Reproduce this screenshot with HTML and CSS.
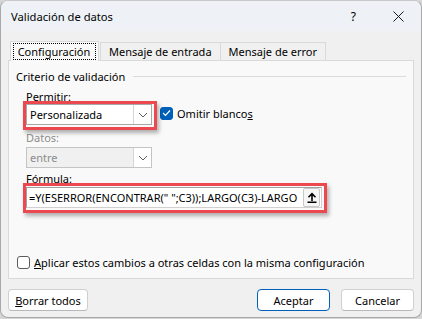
FILE: index.html
```html
<!DOCTYPE html>
<html lang="es">
<head>
  <meta charset="UTF-8" />
  <title>Validación de datos</title>
  <link rel="stylesheet" href="styles.css">
</head>
<body>
  <div class="dialog">
    <div class="titlebar">
      <span class="title">Validación de datos</span>
      <span class="help">?</span>
      <svg class="close" width="11" height="11" viewBox="0 0 11 11">
        <path d="M0.5 0.5 L10.5 10.5 M10.5 0.5 L0.5 10.5" stroke="#1a1a1a" stroke-width="1" fill="none"/>
      </svg>
    </div>

    <div class="content">
      <div class="tabs">
        <div class="tab active"><span class="focus">Configuración</span></div>
        <div class="tab">Mensaje de entrada</div>
        <div class="tab">Mensaje de error</div>
      </div>

      <div class="panel">
        <div class="group-title">
          <span>Criterio de validación</span>
          <div class="rule"></div>
        </div>

        <div class="fields">
          <label class="label first">Permitir:</label>
          <div class="row">
            <div class="highlight">
              <div class="select">
                <span class="value">Personalizada</span>
                <span class="arrow">
                  <svg width="10" height="6" viewBox="0 0 10 6"><path d="M1 1 L5 5 L9 1" stroke="#606060" stroke-width="1" fill="none"/></svg>
                </span>
              </div>
            </div>
            <div class="check-item">
              <span class="checkbox checked">
                <svg width="9" height="8" viewBox="0 0 9 8"><path d="M1 4 L3.5 6.5 L8 1.5" stroke="#fff" stroke-width="1.2" fill="none"/></svg>
              </span>
              <span>Omitir blanco<u>s</u></span>
            </div>
          </div>

          <label class="label disabled">Datos:</label>
          <div class="select disabled">
            <span class="value">entre</span>
            <span class="arrow">
              <svg width="10" height="6" viewBox="0 0 10 6"><path d="M1 1 L5 5 L9 1" stroke="#606060" stroke-width="1" fill="none"/></svg>
            </span>
          </div>

          <label class="label formula-label">Fórmula:</label>
          <div class="highlight">
            <div class="formula">
              <span class="formula-text">=Y(ESERROR(ENCONTRAR(" ";C3));LARGO(C3)-LARGO</span>
              <span class="upload">
                <svg width="10" height="11" viewBox="0 0 10 11"><path d="M5 9 L5 2 M1.5 5.2 L5 1.7 L8.5 5.2 M0.5 10.2 L9.5 10.2" stroke="#000" stroke-width="1.6" fill="none"/></svg>
              </span>
            </div>
          </div>
        </div>

        <div class="check-item apply">
          <span class="checkbox"></span>
          <span><u>A</u>plicar estos cambios a otras celdas con la misma configuración</span>
        </div>
      </div>

      <div class="footer">
        <button class="btn wide"><u>B</u>orrar todos</button>
        <div class="spacer"></div>
        <button class="btn primary">Aceptar</button>
        <button class="btn">Cancelar</button>
      </div>
    </div>
  </div>
</body>
</html>
```

FILE: styles.css
```css
body {
  margin: 0;
  background: #d6d6d6;
  font-family: "Noto Sans", sans-serif;
  font-size: 11px;
  color: #000;
}
.dialog {
  width: 420px;
  height: 316px;
  background: #f0f0f0;
  border: 1px solid #a8a8a8;
  border-top-color: #c8c8c8;
  border-radius: 8px;
  overflow: hidden;
  display: flex;
  flex-direction: column;
}
.titlebar {
  height: 30px;
  background: #eef2f7;
  display: flex;
  align-items: center;
  padding-left: 10px;
  font-size: 11.2px;
}
.title {
  flex: 1;
}
.help {
  font-size: 12px;
  margin-right: 37px;
}
.close {
  margin-right: 17px;
}
.content {
  flex: 1;
  padding: 10px 7px 0 7px;
  display: flex;
  flex-direction: column;
}
.tabs {
  display: flex;
  height: 19px;
  align-items: flex-end;
  padding-left: 2px;
}
.tab {
  height: 18px;
  padding: 0 8px;
  border: 1px solid #d9d9d9;
  border-bottom: none;
  background: #f0f0f0;
  display: flex;
  align-items: center;
  margin-left: -1px;
  box-sizing: border-box;
}
.tab.active {
  height: 20px;
  width: 89px;
  justify-content: center;
  background: #f9f9f9;
  padding: 0;
  margin-left: 0;
  margin-right: 2px;
  position: relative;
  top: 1px;
  z-index: 1;
}
.focus {
  outline: 1px dotted #000;
  padding: 0 5px 0 4px;
  line-height: 15px;
}
.panel {
  height: 219px;
  box-sizing: border-box;
  background: #f9f9f9;
  border: 1px solid #d9d9d9;
  padding: 7px 7px 0 7px;
  display: flex;
  flex-direction: column;
}
.group-title {
  display: flex;
  align-items: center;
  height: 16px;
}
.rule {
  flex: 1;
  height: 1px;
  background: #dcdcdc;
  margin: 1px 0 0 8px;
}
.fields {
  padding-left: 10px;
  display: flex;
  flex-direction: column;
  align-items: flex-start;
}
.label {
  margin-top: 5px;
  line-height: 15px;
}
.label.first {
  margin-top: 5px;
}
.label.disabled {
  color: #8c8c8c;
}
.formula-label {
  margin-top: 3px;
}
.row {
  display: flex;
  align-items: center;
}
/* red annotation boxes drawn with shadows so they don't push the layout */
.highlight {
  padding: 0 2px 2px 0;
  margin: 0 -2px -2px 0;
  box-shadow: 0 0 0 3px #ec4850, 2px 3px 4px 3px rgba(0, 0, 0, 0.3);
  position: relative;
  z-index: 1;
  background: #f9f9f9;
}
.select {
  width: 126px;
  height: 21px;
  box-sizing: border-box;
  border: 1px solid #a8a8a8;
  background: #fff;
  display: flex;
  align-items: center;
}
.select .value {
  flex: 1;
  padding-left: 3px;
}
.select .arrow {
  width: 17px;
  height: 19px;
  border-left: 1px solid #d4d4d4;
  display: flex;
  align-items: center;
  justify-content: center;
}
.select.disabled {
  margin-top: 2px;
  background: #f0f0f0;
  border-color: #c4c4c4;
  color: #8c8c8c;
}
.select.disabled .arrow {
  background: #fff;
}
.check-item {
  display: flex;
  align-items: center;
  gap: 4px;
}
.row .check-item {
  margin-left: 8px;
  margin-top: -3px;
}
.checkbox {
  width: 13px;
  height: 13px;
  box-sizing: border-box;
  border: 1px solid #5c5c5c;
  border-radius: 3px;
  background: #fff;
  display: flex;
  align-items: center;
  justify-content: center;
}
.checkbox.checked {
  background: #005fb8;
  border-color: #005fb8;
}
.formula {
  width: 296px;
  height: 21px;
  box-sizing: border-box;
  border: 1px solid #a0a0a0;
  border-right-color: #d0d0d0;
  border-bottom-color: #d0d0d0;
  background: #fff;
  display: flex;
  align-items: center;
  margin-top: 1px;
}
.formula-text {
  flex: 1;
  padding-left: 2px;
  white-space: nowrap;
  overflow: hidden;
}
.upload {
  width: 15px;
  height: 17px;
  margin-right: 1px;
  border: 1px solid #c8c8c8;
  border-radius: 2px;
  background: #f6f6f6;
  display: flex;
  align-items: center;
  justify-content: center;
}
.apply {
  margin-top: auto;
  margin-bottom: 8px;
  padding-left: 1px;
}
.footer {
  display: flex;
  align-items: center;
  gap: 11px;
  margin-top: 10px;
}
.spacer {
  flex: 1;
}
.btn {
  width: 73px;
  height: 22px;
  padding: 0;
  border: 1px solid #d0d0d0;
  border-bottom-color: #b8b8b8;
  border-radius: 4px;
  background: #fff;
  font-family: inherit;
  font-size: 11px;
  color: #000;
}
.btn.wide {
  width: 80px;
}
.btn.primary {
  border: 1px solid #005fb8;
}
```
